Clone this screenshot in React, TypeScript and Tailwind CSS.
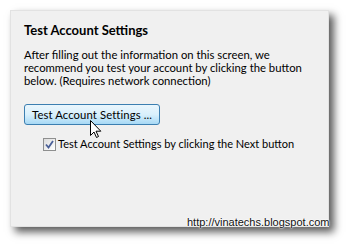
import React from "react";

function Cursor() {
  return (
    <svg
      width="12"
      height="19"
      viewBox="0 0 12 19"
      className="absolute left-[90px] top-[120px]"
    >
      <path
        d="M0.5 0.5 L0.5 15.5 L4 12 L6.5 17.5 L8.5 16.5 L6 11.2 L10.8 11.2 Z"
        fill="#ffffff"
        stroke="#000000"
        strokeWidth="1"
        strokeLinejoin="round"
      />
    </svg>
  );
}

function CheckBox() {
  return (
    <div className="w-[13px] h-[13px] border border-[#8e8f8f] bg-gradient-to-br from-[#dcdcdc] to-[#ffffff] flex items-center justify-center shrink-0">
      <svg width="9" height="9" viewBox="0 0 9 9">
        <path
          d="M1 4.5 L3.5 7.5 L8 1"
          fill="none"
          stroke="#4a5f97"
          strokeWidth="1.8"
        />
      </svg>
    </div>
  );
}

export default function App() {
  return (
    <div className="relative w-[347px] h-[244px] bg-white pl-[10px] pt-[10px] font-['Lato',sans-serif] text-[11.3px] text-black whitespace-nowrap">
      <div className="w-[319px] h-[217px] bg-[#f0f0f0] border border-[#e2e2e2] shadow-[5px_5px_8px_rgba(0,0,0,0.65)] pl-[13px] pt-[12px]">
        <h3 className="font-bold text-[13px] leading-[14px]">Test Account Settings</h3>

        <p className="mt-[11px] leading-[13px]">
          After filling out the information on this screen, we
          <br />
          recommend you test your account by clicking the button
          <br />
          below. (Requires network connection)
        </p>

        {/* Button in hover state */}
        <button className="mt-[17px] w-[136px] h-[21px] rounded-[3px] border border-[#3c7fb1] bg-gradient-to-b from-[#eaf6fd] via-[#d9f0fc] to-[#a7d9f5] text-left pl-[7px] leading-[18px] tracking-[0.1px]">
          Test Account Settings ...
        </button>

        <div className="mt-[12px] ml-[19px] flex items-center gap-[2px]">
          <CheckBox />
          <span className="text-[11px] leading-[14px]">Test Account Settings by clicking the Next button</span>
        </div>
      </div>

      <Cursor />

      <div className="absolute left-[187px] top-[216px] font-['Liberation_Sans',Arial,sans-serif] text-[11px] leading-[13px] text-[#111] [text-shadow:0_0_2px_#fff,0_0_2px_#fff,0_0_1px_#fff]">
        http://vinatechs.blogspot.com
      </div>
    </div>
  );
}
